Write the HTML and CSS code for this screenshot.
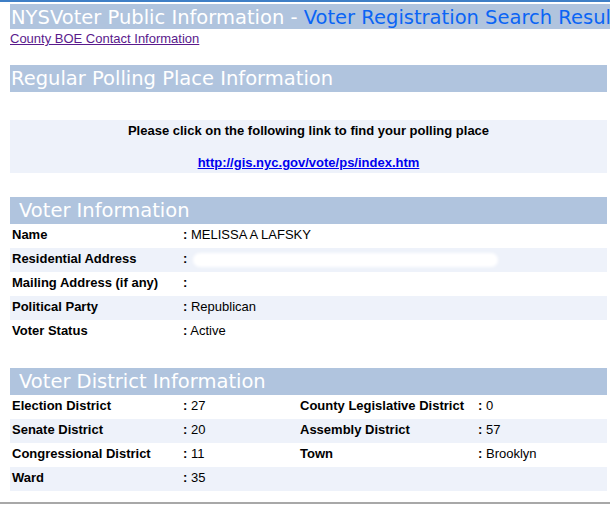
FILE: index.html
```html
<!DOCTYPE html>
<html>
<head>
<meta charset="utf-8">
<title>NYSVoter Public Information</title>
<link rel="stylesheet" href="styles.css">
</head>
<body>
<div class="topline"></div>
<div class="page">
  <div class="title"><span class="title-w">NYSVoter Public Information - </span><span class="title-b">Voter Registration Search Results</span></div>
  <a class="boe" href="#">County BOE Contact Information</a>

  <div class="band band-polling">Regular Polling Place Information</div>
  <div class="polling">
    <div class="polling-text">Please click on the following link to find your polling place</div>
    <a class="polling-link" href="#">http://gis.nyc.gov/vote/ps/index.htm</a>
  </div>

  <div class="band band-voter">Voter Information</div>
  <div class="info">
    <div class="row"><div class="lbl">Name</div><div class="val"><b>:</b> MELISSA A LAFSKY</div></div>
    <div class="row alt"><div class="lbl">Residential Address</div><div class="val"><b>:</b> <span class="blur"></span></div></div>
    <div class="row"><div class="lbl">Mailing Address (if any)</div><div class="val"><b>:</b></div></div>
    <div class="row alt"><div class="lbl">Political Party</div><div class="val"><b>:</b> Republican</div></div>
    <div class="row"><div class="lbl">Voter Status</div><div class="val"><b>:</b> Active</div></div>
  </div>

  <div class="band band-district">Voter District Information</div>
  <div class="district">
    <div class="drow"><div class="lbl">Election District</div><div class="val"><b>:</b> 27</div><div class="lbl">County Legislative District</div><div class="val"><b>:</b> 0</div></div>
    <div class="drow alt"><div class="lbl">Senate District</div><div class="val"><b>:</b> 20</div><div class="lbl">Assembly District</div><div class="val"><b>:</b> 57</div></div>
    <div class="drow"><div class="lbl">Congressional District</div><div class="val"><b>:</b> 11</div><div class="lbl">Town</div><div class="val"><b>:</b> Brooklyn</div></div>
    <div class="drow alt"><div class="lbl">Ward</div><div class="val"><b>:</b> 35</div><div class="lbl"></div><div class="val"></div></div>
  </div>
</div>
<div class="bottomline"></div>
</body>
</html>
```

FILE: styles.css
```css
html, body {
  margin: 0;
  padding: 0;
  background: #ffffff;
  overflow: hidden;
}
body {
  width: 610px;
  height: 505px;
  font-family: "Liberation Sans", Arial, sans-serif;
  font-size: 13px;
  color: #000;
}
.topline {
  height: 2px;
  background: #3f7fc6;
}
.page {
  margin-left: 10px;
  width: 597px;
}
.title {
  margin-top: 2px;
  height: 25px;
  line-height: 27px;
  width: 620px;
  background: #b0c4de;
  font-family: "DejaVu Sans", sans-serif;
  font-size: 19.5px;
  white-space: nowrap;
  overflow: hidden;
  padding-left: 1px;
  box-sizing: border-box;
}
.title-w { color: #ffffff; }
.title-b { color: #0a64f5; }
.boe {
  display: inline-block;
  margin-top: 2px;
  font-family: "Liberation Sans", Arial, sans-serif;
  font-size: 13px;
  line-height: 15px;
  color: #5a1a8c;
  text-decoration: underline;
}
.band {
  height: 27px;
  line-height: 26px;
  padding-top: 1px;
  box-sizing: border-box;
  background: #b0c4de;
  color: #ffffff;
  font-family: "DejaVu Sans", sans-serif;
  font-size: 19.5px;
  white-space: nowrap;
}
.band-polling {
  margin-top: 19px;
  padding-left: 1px;
}
.band-voter, .band-district {
  padding-left: 9px;
}
.polling {
  margin-top: 28px;
  background: #eef2fa;
  height: 53px;
  display: flex;
  flex-direction: column;
  align-items: center;
  padding-top: 3px;
  box-sizing: border-box;
  font-weight: bold;
  font-size: 13px;
}
.polling-text {
  line-height: 16px;
}
.polling-link {
  margin-top: 16px;
  line-height: 16px;
  color: #0000ee;
  text-decoration: underline;
}
.band-voter {
  margin-top: 24px;
}
.row {
  display: grid;
  grid-template-columns: 172px 1fr;
  height: 24px;
  align-items: center;
}
.drow {
  display: grid;
  grid-template-columns: 172px 116px 179px 1fr;
  height: 24px;
  align-items: center;
}
.alt {
  background: #eef2fa;
}
.lbl {
  font-weight: bold;
  padding-left: 2px;
  white-space: nowrap;
  line-height: 16px;
  margin-top: -2px;
}
.val {
  white-space: nowrap;
  padding-left: 1px;
  line-height: 16px;
  margin-top: -2px;
}
.blur {
  display: inline-block;
  vertical-align: middle;
  width: 305px;
  height: 14px;
  margin-left: 2px;
  background: #ffffff;
  border-radius: 8px;
  filter: blur(1.5px);
}
.band-district {
  margin-top: 24px;
}
.bottomline {
  margin-top: 11px;
  height: 2px;
  background: #a8a8a8;
}
```
